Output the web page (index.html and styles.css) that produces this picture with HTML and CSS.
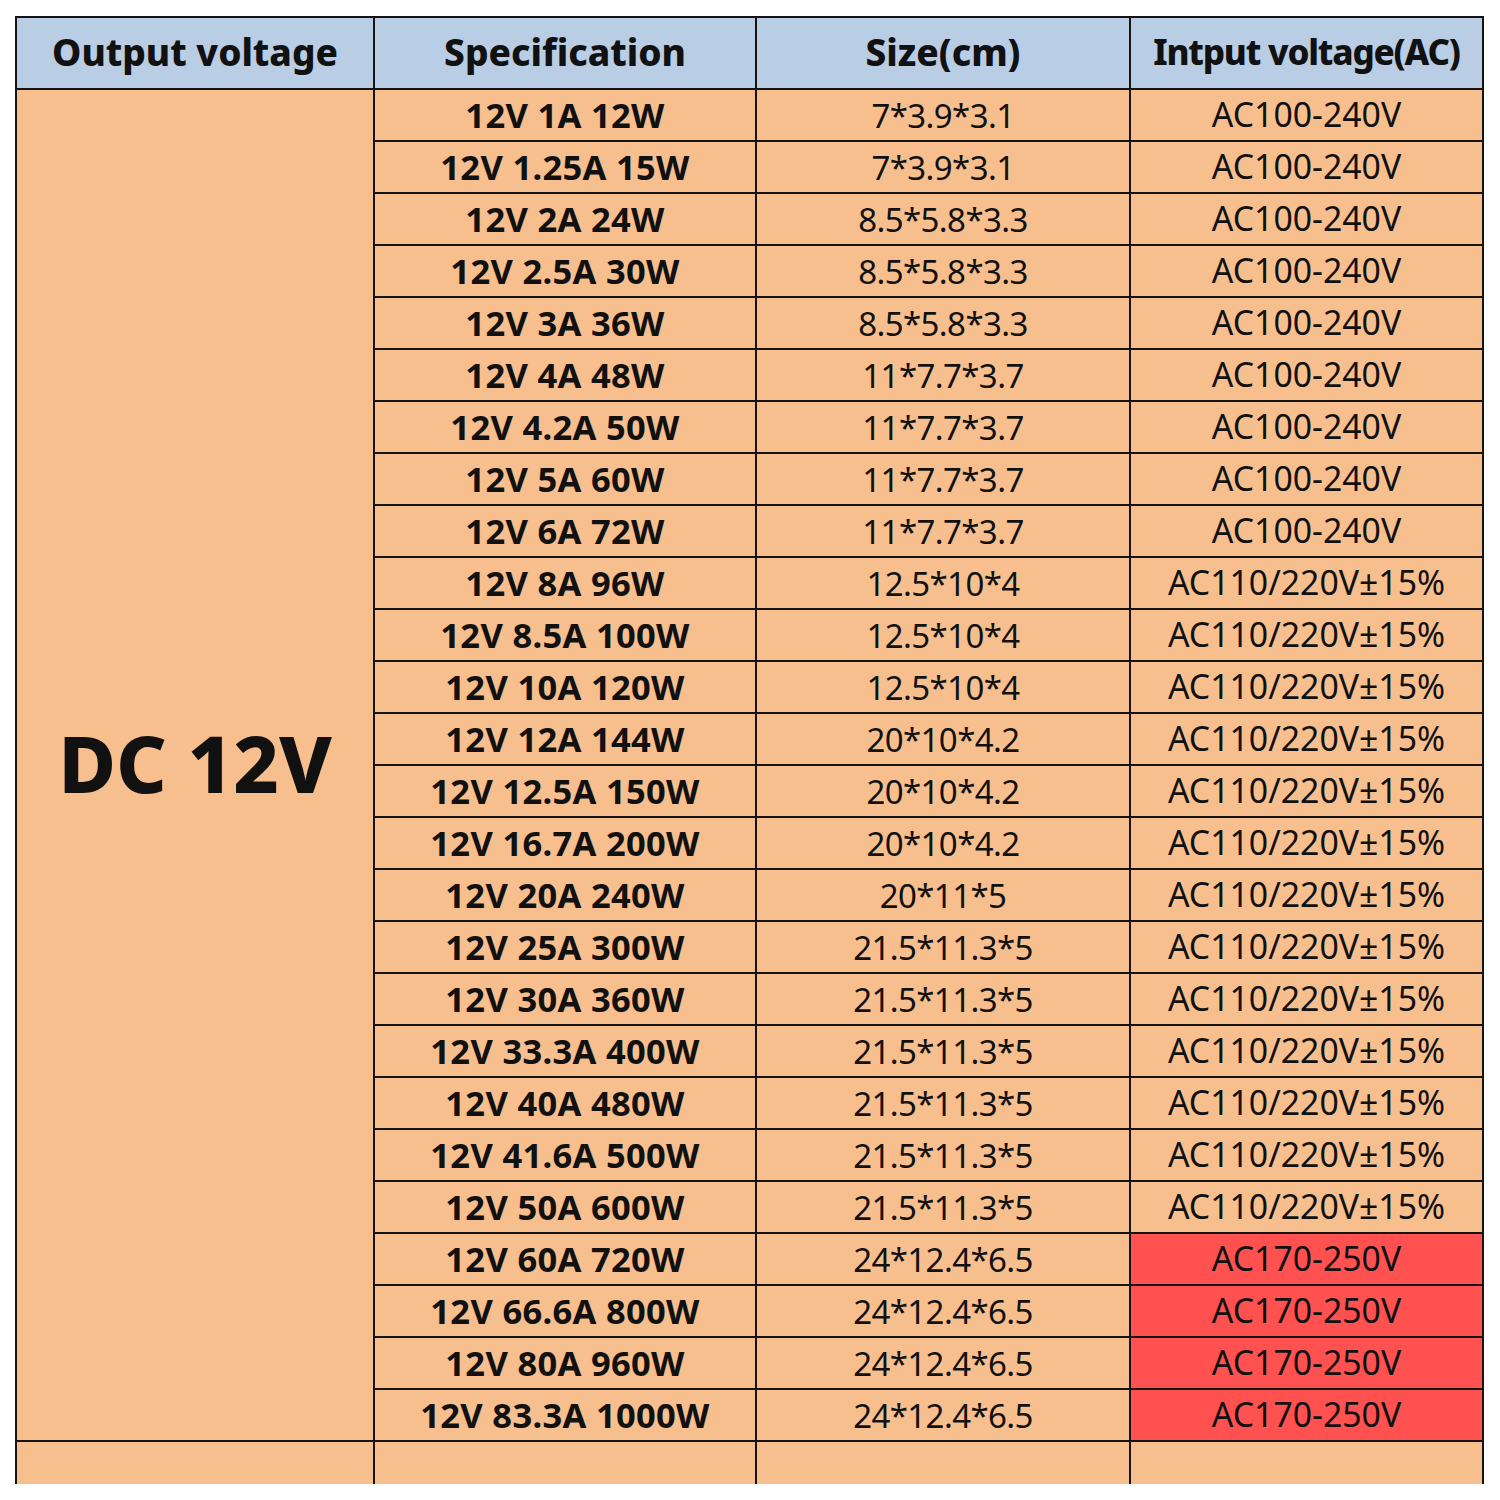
FILE: index.html
```html
<!DOCTYPE html>
<html>
<head>
<meta charset="utf-8">
<link rel="stylesheet" href="styles.css">
</head>
<body>
<table class="spec">
  <colgroup>
    <col class="c1"><col class="c2"><col class="c3"><col class="c4">
  </colgroup>
  <thead>
    <tr class="head">
      <th>Output voltage</th>
      <th>Specification</th>
      <th>Size(cm)</th>
      <th class="tight">Intput voltage(AC)</th>
    </tr>
  </thead>
  <tbody>
    <tr><td class="dc" rowspan="26">DC 12V</td><td class="sp">12V 1A 12W</td><td class="sz">7*3.9*3.1</td><td>AC100-240V</td></tr>
    <tr><td class="sp">12V 1.25A 15W</td><td class="sz">7*3.9*3.1</td><td>AC100-240V</td></tr>
    <tr><td class="sp">12V 2A 24W</td><td class="sz">8.5*5.8*3.3</td><td>AC100-240V</td></tr>
    <tr><td class="sp">12V 2.5A 30W</td><td class="sz">8.5*5.8*3.3</td><td>AC100-240V</td></tr>
    <tr><td class="sp">12V 3A 36W</td><td class="sz">8.5*5.8*3.3</td><td>AC100-240V</td></tr>
    <tr><td class="sp">12V 4A 48W</td><td class="sz">11*7.7*3.7</td><td>AC100-240V</td></tr>
    <tr><td class="sp">12V 4.2A 50W</td><td class="sz">11*7.7*3.7</td><td>AC100-240V</td></tr>
    <tr><td class="sp">12V 5A 60W</td><td class="sz">11*7.7*3.7</td><td>AC100-240V</td></tr>
    <tr><td class="sp">12V 6A 72W</td><td class="sz">11*7.7*3.7</td><td>AC100-240V</td></tr>
    <tr><td class="sp">12V 8A 96W</td><td class="sz">12.5*10*4</td><td>AC110/220V±15%</td></tr>
    <tr><td class="sp">12V 8.5A 100W</td><td class="sz">12.5*10*4</td><td>AC110/220V±15%</td></tr>
    <tr><td class="sp">12V 10A 120W</td><td class="sz">12.5*10*4</td><td>AC110/220V±15%</td></tr>
    <tr><td class="sp">12V 12A 144W</td><td class="sz">20*10*4.2</td><td>AC110/220V±15%</td></tr>
    <tr><td class="sp">12V 12.5A 150W</td><td class="sz">20*10*4.2</td><td>AC110/220V±15%</td></tr>
    <tr><td class="sp">12V 16.7A 200W</td><td class="sz">20*10*4.2</td><td>AC110/220V±15%</td></tr>
    <tr><td class="sp">12V 20A 240W</td><td class="sz">20*11*5</td><td>AC110/220V±15%</td></tr>
    <tr><td class="sp">12V 25A 300W</td><td class="sz">21.5*11.3*5</td><td>AC110/220V±15%</td></tr>
    <tr><td class="sp">12V 30A 360W</td><td class="sz">21.5*11.3*5</td><td>AC110/220V±15%</td></tr>
    <tr><td class="sp">12V 33.3A 400W</td><td class="sz">21.5*11.3*5</td><td>AC110/220V±15%</td></tr>
    <tr><td class="sp">12V 40A 480W</td><td class="sz">21.5*11.3*5</td><td>AC110/220V±15%</td></tr>
    <tr><td class="sp">12V 41.6A 500W</td><td class="sz">21.5*11.3*5</td><td>AC110/220V±15%</td></tr>
    <tr><td class="sp">12V 50A 600W</td><td class="sz">21.5*11.3*5</td><td>AC110/220V±15%</td></tr>
    <tr><td class="sp">12V 60A 720W</td><td class="sz">24*12.4*6.5</td><td class="hot">AC170-250V</td></tr>
    <tr><td class="sp">12V 66.6A 800W</td><td class="sz">24*12.4*6.5</td><td class="hot">AC170-250V</td></tr>
    <tr><td class="sp">12V 80A 960W</td><td class="sz">24*12.4*6.5</td><td class="hot">AC170-250V</td></tr>
    <tr><td class="sp">12V 83.3A 1000W</td><td class="sz">24*12.4*6.5</td><td class="hot">AC170-250V</td></tr>
    <tr class="tail"><td></td><td></td><td></td><td></td></tr>
  </tbody>
</table>
</body>
</html>
```
FILE: styles.css
```css
html, body {
  margin: 0;
  padding: 0;
  background: #ffffff;
}
body {
  padding: 16px 0 0 15px;
}
.spec {
  border-collapse: collapse;
  table-layout: fixed;
  width: 1467px;
  font-family: "Noto Sans", "Open Sans", sans-serif;
  color: #111111;
  background: #f8bf8e;
}
.c1 { width: 358px; }
.c2 { width: 382px; }
.c3 { width: 374px; }
.c4 { width: 353px; }
.spec th,
.spec td {
  border: 2px solid #141414;
  padding: 0;
  text-align: center;
  vertical-align: middle;
  font-size: 33.8px;
  line-height: 1;
  white-space: nowrap;
}
.spec th {
  background: #b9cde5;
  font-weight: 800;
  font-size: 37px;
  height: 66px;
  padding-bottom: 4px;
}
.spec th.tight {
  font-size: 35px;
  letter-spacing: -1.2px;
}
.spec td {
  height: 50px;
  font-weight: 400;
}
.spec td.sz {
  font-size: 33px;
  letter-spacing: -0.6px;
}
.spec td.sp {
  font-weight: 700;
  font-size: 34.5px;
  letter-spacing: 0.3px;
}
.spec td.dc {
  font-size: 79px;
  font-weight: 800;
  letter-spacing: 0;
  padding-bottom: 6px;
}
.spec td.hot {
  background: #ff5150;
}
.spec tr.tail td {
  height: 42px;
  border-bottom: none;
}
```
